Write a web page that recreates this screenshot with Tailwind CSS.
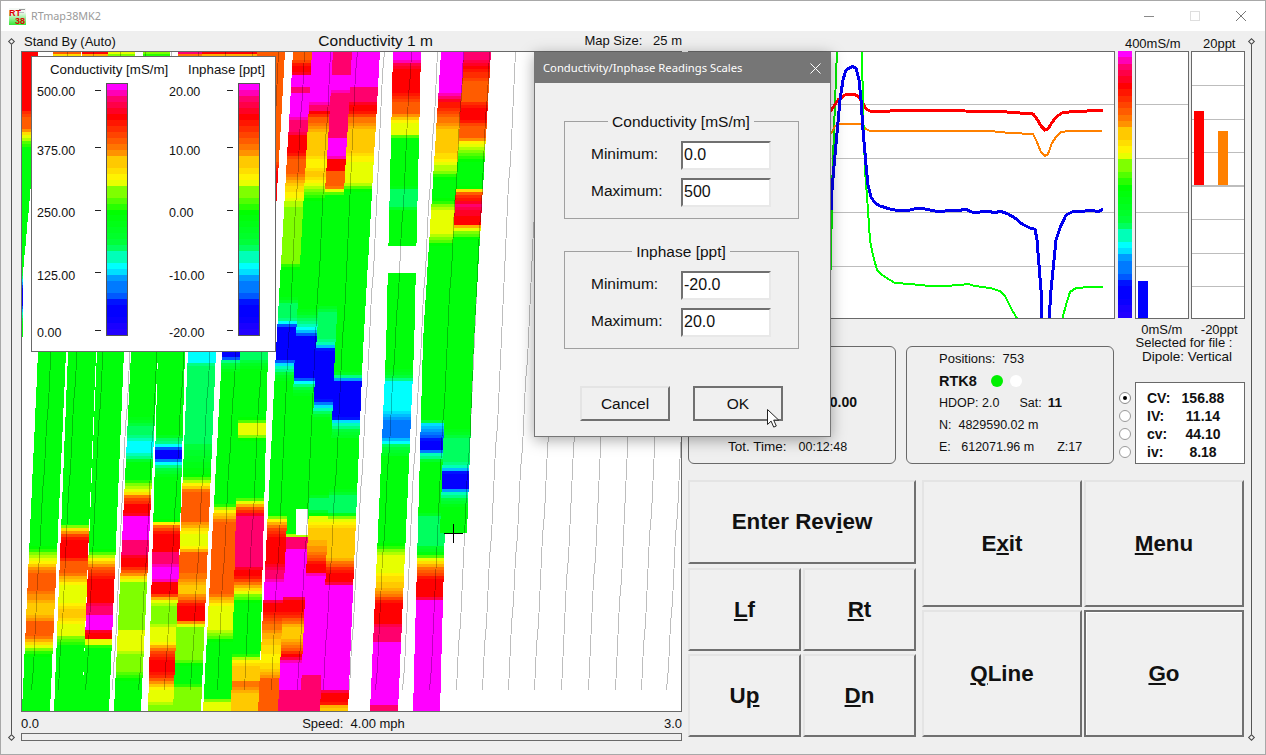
<!DOCTYPE html>
<html>
<head>
<meta charset="utf-8">
<script src="https://cdn.jsdelivr.net/npm/@tailwindcss/browser@4"></script>
</head>
<body class="m-0 bg-[#efefef]">
<div class="relative w-[1266px] h-[755px] overflow-hidden bg-[#efefef] border border-[#a8a8a8] box-border font-['Liberation_Sans',sans-serif] text-[13px] leading-[14px] text-[#111]">

  <!-- title bar -->
  <div class="h-[30px] bg-white flex items-center relative">
    <svg class="ml-[8px] w-[17px] h-[17px]" viewBox="0 0 17 17">
      <defs><linearGradient id="ic" x1="0" y1="0" x2="0" y2="1"><stop offset="0.25" stop-color="#f4f8f4"/><stop offset="1" stop-color="#35e635"/></linearGradient></defs>
      <rect width="17" height="17" fill="url(#ic)"/>
      <rect x="10" y="1" width="6" height="1" fill="#999"/><rect x="10" y="4" width="5" height="1" fill="#bbb"/>
      <text x="0" y="8" font-size="9" font-weight="700" fill="#e00000" font-family="Liberation Sans">RT</text>
      <text x="6" y="16" font-size="9" font-weight="700" fill="#e00000" font-family="Liberation Sans">38</text>
    </svg>
    <span class="ml-[5px] text-[10.8px] text-[#9a9a9a] font-['Noto_Sans',sans-serif]">RTmap38MK2</span>
    <div class="ml-auto flex items-center h-full">
      <svg class="w-[46px] h-[30px]" viewBox="0 0 46 30"><path d="M18 15.5h10" stroke="#8a8a8a" fill="none"/></svg>
      <svg class="w-[46px] h-[30px]" viewBox="0 0 46 30"><rect x="18.5" y="10.5" width="9" height="9" stroke="#dedede" fill="none"/></svg>
      <svg class="w-[46px] h-[30px] mr-[1px]" viewBox="0 0 46 30"><path d="M18 10l10 10M28 10l-10 10" stroke="#777" fill="none"/></svg>
    </div>
  </div>

  <!-- frame guide lines -->
  <div class="absolute left-[10px] top-[40px] h-[697px] w-px bg-[#555]"></div>
  <div class="absolute left-[7px] top-[38px] w-[5px] h-[5px] rotate-45 border border-[#444] bg-[#efefef] ml-[1px]"></div>
  <div class="absolute left-[7px] top-[734px] w-[5px] h-[5px] rotate-45 border border-[#444] bg-[#efefef] ml-[1px]"></div>
  <div class="absolute left-[1250px] top-[40px] h-[697px] w-px bg-[#555]"></div>
  <div class="absolute left-[1247px] top-[38px] w-[5px] h-[5px] rotate-45 border border-[#444] bg-[#efefef] ml-[1px]"></div>
  <div class="absolute left-[1247px] top-[734px] w-[5px] h-[5px] rotate-45 border border-[#444] bg-[#efefef] ml-[1px]"></div>

  <div class="flex pl-[20px]">
    <!-- left column -->
    <div class="w-[661px] shrink-0">
      <div class="h-[20px] flex items-end justify-between pb-[2px] pl-[3px]">
        <span>Stand By (Auto)</span>
        <span class="text-[15.5px] leading-[16px] ml-[51px]">Conductivity 1 m</span>
        <span class="pb-px">Map Size: &nbsp;&nbsp;25 m</span>
      </div>
      <div class="relative w-[661px] h-[661px] border border-[#696969] bg-white box-border">
        <svg id="map" class="block w-[659px] h-[659px]" viewBox="22 52 659 659" shape-rendering="crispEdges"></svg>
        <!-- legend -->
        <div class="absolute left-[9px] top-[4px] w-[245px] h-[296px] bg-white border border-[#696969] box-border">
          <div class="relative h-[27px] text-[13.3px]">
            <span class="absolute left-[18px] top-[6px] whitespace-nowrap">Conductivity [mS/m]</span>
            <span class="absolute left-[156px] top-[6px] whitespace-nowrap">Inphase [ppt]</span>
          </div>
          <div class="flex pl-[5px] text-[12.5px]">
            <div class="w-[69px] shrink-0">
              <div class="h-[59px] flex items-start"><span class="w-[58px] mt-px">500.00</span><i class="block w-[6px] h-px bg-[#222] mt-[6px]"></i></div>
              <div class="h-[62px] flex items-start"><span class="w-[58px] mt-px">375.00</span><i class="block w-[6px] h-px bg-[#222] mt-[4px]"></i></div>
              <div class="h-[63px] flex items-start"><span class="w-[58px] mt-px">250.00</span><i class="block w-[6px] h-px bg-[#222] mt-[5px]"></i></div>
              <div class="h-[57px] flex items-start"><span class="w-[58px] mt-px">125.00</span><i class="block w-[6px] h-px bg-[#222] mt-[4px]"></i></div>
              <div class="flex items-start"><span class="w-[58px] mt-px">0.00</span><i class="block w-[6px] h-px bg-[#222] mt-[5px]"></i></div>
            </div>
            <div class="w-[22px] h-[253px] -mt-px border border-[#555] shrink-0 box-border"><svg class="scale block w-full h-full" preserveAspectRatio="none" viewBox="0 0 20 251" shape-rendering="crispEdges"></svg></div>
            <div class="w-[69px] shrink-0 ml-[41px]">
              <div class="h-[59px] flex items-start"><span class="w-[58px] mt-px">20.00</span><i class="block w-[6px] h-px bg-[#222] mt-[6px]"></i></div>
              <div class="h-[62px] flex items-start"><span class="w-[58px] mt-px">10.00</span><i class="block w-[6px] h-px bg-[#222] mt-[4px]"></i></div>
              <div class="h-[63px] flex items-start"><span class="w-[58px] mt-px">0.00</span><i class="block w-[6px] h-px bg-[#222] mt-[5px]"></i></div>
              <div class="h-[57px] flex items-start"><span class="w-[58px] mt-px">-10.00</span><i class="block w-[6px] h-px bg-[#222] mt-[4px]"></i></div>
              <div class="flex items-start"><span class="w-[58px] mt-px">-20.00</span><i class="block w-[6px] h-px bg-[#222] mt-[5px]"></i></div>
            </div>
            <div class="w-[22px] h-[253px] -mt-px border border-[#555] shrink-0 box-border"><svg class="scale block w-full h-full" preserveAspectRatio="none" viewBox="0 0 20 251" shape-rendering="crispEdges"></svg></div>
          </div>
        </div>
      </div>
      <div class="h-[21px] flex items-center justify-between pt-[2px]">
        <span>0.0</span>
        <span class="ml-[4px]">Speed: &nbsp;4.00 mph</span>
        <span>3.0</span>
      </div>
      <div class="h-[8px] border border-[#696969] bg-[#efefef] box-border"></div>
    </div>

    <!-- right column -->
    <div class="ml-[6px] w-[558px] shrink-0">
      <div class="flex">
        <div class="w-[427px] shrink-0 pt-[20px]">
          <div class="h-[268px] border border-[#696969] bg-white box-border">
            <svg class="block w-[425px] h-[266px]" viewBox="689 52 425 266" shape-rendering="crispEdges">
              <g stroke="#bdbdbd" fill="none"><path d="M689 104.5H1114M689 158.5H1114M689 212.5H1114M689 266.5H1114"/></g>
              <polyline fill="none" stroke="#00ee00" stroke-width="2" points="831,270 832,190 834,130 837,50"/>
              <polyline fill="none" stroke="#ff0000" stroke-width="3" points="830,112 838,100 845,95 853,94 858,96 862,102 866,109 870,111 880,111.5 900,110.5 920,110.5 965,111 1000,111.5 1020,113 1033,114 1037,119 1041,126 1045,130 1048,129 1051,124 1056,117 1062,113 1072,111.5 1103,110.5"/>
              <polyline fill="none" stroke="#ff8000" stroke-width="2" points="831,134 835,126 840,124 862,124 866,129 870,131 900,131 990,131 1010,133 1033,134 1036,140 1041,152 1045,156 1048,154 1052,143 1056,137 1061,132 1070,131 1102,131"/>
              <polyline fill="none" stroke="#00ff00" stroke-width="2" points="862,50 863,110 865,170 868,210 870,240 873,255 877,270 882,275 890,280 895,283 910,284 930,286 945,286 960,285 968,284 975,286 990,288 1000,291 1005,296 1012,310 1018,320"/>
              <polyline fill="none" stroke="#00ff00" stroke-width="2" points="1062,320 1066,305 1070,292 1076,288 1090,287 1103,287"/>
              <polyline fill="none" stroke="#0000ee" stroke-width="3" points="831,210 832,190 835,155 840,100 843,80 846,70 852,66.5 856,68 859,80 861,100 863,130 866,165 868,185 871,197 875,203 880,206 890,209 900,211 910,210 916,208.5 925,209 935,211 945,211 952,210 958,211 965,209 972,212 980,212 988,211 995,213 1000,211 1008,214 1015,218 1022,224 1030,228 1034,229 1035,229 1037,240 1039,265 1041,290 1042,320"/>
              <polyline fill="none" stroke="#0000ee" stroke-width="3" points="1049,320 1051,290 1054,260 1056,240 1060,228 1066,215 1072,212 1085,211 1092,210 1098,212 1103,209"/>
            </svg>
          </div>
          <div class="mt-[27px] flex gap-[10px]">
            <div class="w-[208px] h-[118px] border border-[#696969] rounded-[6px] box-border relative">
              <div class="absolute right-[38px] top-[48px] font-bold text-[14px]">0.00</div>
              <div class="absolute left-[39px] top-[93px] text-[12.5px] whitespace-nowrap"><span class="text-[13.5px]">Tot. Time:</span><span class="ml-[12px]">00:12:48</span></div>
            </div>
            <div class="w-[208px] h-[118px] border border-[#696969] rounded-[6px] box-border pl-[32px] pt-px text-[12.5px]">
              <div class="h-[22px] flex items-center text-[13px]">Positions: &nbsp;753</div>
              <div class="h-[22px] flex items-center font-bold text-[14.5px]">RTK8<span class="ml-[14px] w-[12px] h-[12px] rounded-full bg-[#00f000]"></span><span class="ml-[7px] w-[12px] h-[12px] rounded-full bg-white"></span></div>
              <div class="h-[22px] flex items-center">HDOP: 2.0<span class="ml-[20px]">Sat:</span><b class="ml-[6px] text-[13.5px]">11</b></div>
              <div class="h-[22px] flex items-center">N: &nbsp;4829590.02 m</div>
              <div class="h-[22px] flex items-center">E: &nbsp;&nbsp;612071.96 m<span class="ml-[23px]">Z:17</span></div>
            </div>
          </div>
        </div>
        <div class="w-[131px] shrink-0 pl-[3px]">
          <div class="flex h-[20px] items-start pt-[6px]">
            <span class="ml-[2px] w-[66px] text-center">400mS/m</span>
            <span class="ml-[7px] w-[54px] text-center">20ppt</span>
          </div>
          <div class="flex h-[268px]">
            <div class="w-[14px] h-[267px] shrink-0"><svg class="scale block w-full h-full" preserveAspectRatio="none" viewBox="0 0 20 251" shape-rendering="crispEdges"></svg></div>
            <div class="ml-[3px] w-[54px] border border-[#696969] bg-white box-border relative overflow-hidden">
              <div class="absolute left-0 right-0 top-[52px] h-px bg-[#bdbdbd]"></div>
              <div class="absolute left-0 right-0 top-[106px] h-px bg-[#bdbdbd]"></div>
              <div class="absolute left-0 right-0 top-[160px] h-px bg-[#bdbdbd]"></div>
              <div class="absolute left-0 right-0 top-[214px] h-px bg-[#bdbdbd]"></div>
              <div class="absolute left-[2px] bottom-0 w-[10px] h-[37px] bg-[#0000ff]"></div>
            </div>
            <div class="ml-[2px] w-[54px] border border-[#696969] bg-white box-border relative overflow-hidden">
              <div class="absolute left-0 right-0 top-[33px] h-px bg-[#bdbdbd]"></div>
              <div class="absolute left-0 right-0 top-[67px] h-px bg-[#bdbdbd]"></div>
              <div class="absolute left-0 right-0 top-[100px] h-px bg-[#bdbdbd]"></div>
              <div class="absolute left-0 right-0 top-[133px] h-[2px] bg-[#bdbdbd]"></div>
              <div class="absolute left-0 right-0 top-[167px] h-px bg-[#bdbdbd]"></div>
              <div class="absolute left-0 right-0 top-[201px] h-px bg-[#bdbdbd]"></div>
              <div class="absolute left-0 right-0 top-[234px] h-px bg-[#bdbdbd]"></div>
              <div class="absolute left-[2px] top-[59px] w-[10px] h-[74px] bg-[#ff0000]"></div>
              <div class="absolute left-[26px] top-[79px] w-[10px] h-[54px] bg-[#ff8000]"></div>
            </div>
          </div>
          <div class="flex mt-[4px] h-[13px]">
            <span class="ml-[16px] w-[54px] text-center pl-[2px]">0mS/m</span>
            <span class="ml-[5px] w-[54px] text-center">-20ppt</span>
          </div>
          <div class="ml-[16px] w-[100px] text-center whitespace-nowrap">Selected for file :</div>
          <div class="ml-[23px] w-[92px] text-center whitespace-nowrap text-[13.5px]">Dipole: Vertical</div>
          <div class="flex mt-[18px]">
            <div class="w-[16px] pt-[10px] flex flex-col gap-[6px] items-start ml-[1px]">
              <span class="w-[12px] h-[12px] rounded-full border border-[#8a8a8a] bg-white flex items-center justify-center"><i class="block w-[4px] h-[4px] rounded-full bg-black"></i></span>
              <span class="w-[12px] h-[12px] rounded-full border border-[#9a9a9a] bg-white"></span>
              <span class="w-[12px] h-[12px] rounded-full border border-[#9a9a9a] bg-white"></span>
              <span class="w-[12px] h-[12px] rounded-full border border-[#9a9a9a] bg-white"></span>
            </div>
            <div class="w-[110px] h-[82px] border border-[#696969] bg-white box-border pl-[11px] pt-[6px] font-bold text-[14px] leading-[18px]">
              <div class="grid grid-cols-[26px_60px] text-center"><span class="text-left">CV:</span><span>156.88</span><span class="text-left">IV:</span><span>11.14</span><span class="text-left">cv:</span><span>44.10</span><span class="text-left">iv:</span><span>8.18</span></div>
            </div>
          </div>
        </div>
      </div>

      <!-- buttons -->
      <div class="flex mt-[16px]">
        <div class="w-[228px] shrink-0 flex flex-col gap-[4px] text-[22.4px] font-bold">
          <div class="h-[84px] bg-[#f0f0f0] border-2 border-t-[#e4e4e4] border-l-[#e4e4e4] border-r-[#707070] border-b-[#707070] box-border flex items-center justify-center">Enter Rev<u>i</u>ew</div>
          <div class="grid grid-cols-2 gap-x-[2px] gap-y-[3px]">
            <div class="h-[83px] bg-[#f0f0f0] border-2 border-t-[#e4e4e4] border-l-[#e4e4e4] border-r-[#707070] border-b-[#707070] box-border flex items-center justify-center"><span><u>L</u>f</span></div>
            <div class="h-[83px] bg-[#f0f0f0] border-2 border-t-[#e4e4e4] border-l-[#e4e4e4] border-r-[#707070] border-b-[#707070] box-border flex items-center justify-center"><span><u>R</u>t</span></div>
            <div class="h-[83px] bg-[#f0f0f0] border-2 border-t-[#e4e4e4] border-l-[#e4e4e4] border-r-[#707070] border-b-[#707070] box-border flex items-center justify-center"><span>U<u>p</u></span></div>
            <div class="h-[83px] bg-[#f0f0f0] border-2 border-t-[#e4e4e4] border-l-[#e4e4e4] border-r-[#707070] border-b-[#707070] box-border flex items-center justify-center"><span><u>D</u>n</span></div>
          </div>
        </div>
        <div class="ml-[6px] w-[322px] shrink-0 grid grid-cols-2 gap-x-[2px] gap-y-[3px] text-[22.4px] font-bold">
          <div class="h-[127px] bg-[#f0f0f0] border-2 border-t-[#e4e4e4] border-l-[#e4e4e4] border-r-[#707070] border-b-[#707070] box-border flex items-center justify-center"><span>E<u>x</u>it</span></div>
          <div class="h-[127px] bg-[#f0f0f0] border-2 border-t-[#e4e4e4] border-l-[#e4e4e4] border-r-[#707070] border-b-[#707070] box-border flex items-center justify-center"><span><u>M</u>enu</span></div>
          <div class="h-[127px] bg-[#f0f0f0] border-2 border-t-[#e4e4e4] border-l-[#e4e4e4] border-r-[#707070] border-b-[#707070] box-border flex items-center justify-center"><span><u>Q</u>Line</span></div>
          <div class="h-[127px] bg-[#f0f0f0] border-2 border-[#707070] shadow-[inset_1px_1px_0_#fff] box-border flex items-center justify-center"><span><u>G</u>o</span></div>
        </div>
      </div>
    </div>
  </div>

  <!-- dialog -->
  <div class="absolute left-[533px] top-[51px] w-[297px] h-[385px] bg-[#f0f0f0] border border-[#767676] box-border shadow-[0_3px_14px_rgba(0,0,0,0.35)] text-[15.5px] leading-[18px]">
    <div class="h-[30px] bg-[#767676] flex items-center pl-[8px] pr-[9px] text-white text-[11.25px] font-['Noto_Sans',sans-serif]">
      <span>Conductivity/Inphase Readings Scales</span>
      <svg class="ml-auto w-[11px] h-[11px]" viewBox="0 0 11 11"><path d="M0.5 0.5l10 10M10.5 0.5l-10 10" stroke="#fff" fill="none"/></svg>
    </div>
    <div class="pl-[29px] pr-[31px] pt-[37px]">
      <fieldset class="h-[108px] border border-[#a0a0a0] box-border pl-[26px] pr-[27px] m-0 -mt-[9px]">
        <legend class="mx-auto px-[4px] leading-[20px] pt-px">Conductivity [mS/m]</legend>
        <div class="flex items-center justify-between h-[29px] mt-[9px]"><span class="pb-[4px]">Minimum:</span><div class="w-[90px] h-[29px] bg-white border-2 border-t-[#707070] border-l-[#707070] border-r-[#e8e8e8] border-b-[#e8e8e8] box-border flex items-center pl-px pb-[2px] text-[16px]">0.0</div></div>
        <div class="flex items-center justify-between h-[29px] mt-[8px]"><span class="pb-[4px]">Maximum:</span><div class="w-[90px] h-[29px] bg-white border-2 border-t-[#707070] border-l-[#707070] border-r-[#e8e8e8] border-b-[#e8e8e8] box-border flex items-center pl-px pb-[2px] text-[16px]">500</div></div>
      </fieldset>
      <fieldset class="h-[108px] border border-[#a0a0a0] box-border pl-[26px] pr-[27px] m-0 mt-[22px]">
        <legend class="mx-auto px-[4px] leading-[20px] pt-px">Inphase [ppt]</legend>
        <div class="flex items-center justify-between h-[29px] mt-[9px]"><span class="pb-[4px]">Minimum:</span><div class="w-[90px] h-[29px] bg-white border-2 border-t-[#707070] border-l-[#707070] border-r-[#e8e8e8] border-b-[#e8e8e8] box-border flex items-center pl-px pb-[2px] text-[16px]">-20.0</div></div>
        <div class="flex items-center justify-between h-[29px] mt-[8px]"><span class="pb-[4px]">Maximum:</span><div class="w-[90px] h-[29px] bg-white border-2 border-t-[#707070] border-l-[#707070] border-r-[#e8e8e8] border-b-[#e8e8e8] box-border flex items-center pl-px pb-[2px] text-[16px]">20.0</div></div>
      </fieldset>
      <div class="flex mt-[37px] ml-[16px] gap-[23px]">
        <div class="w-[90px] h-[35px] bg-[#f0f0f0] border-2 border-t-[#e4e4e4] border-l-[#e4e4e4] border-r-[#707070] border-b-[#707070] box-border flex items-center justify-center">Cancel</div>
        <div class="w-[90px] h-[35px] bg-[#f0f0f0] border-2 border-[#707070] box-border flex items-center justify-center">OK</div>
      </div>
    </div>
    <svg class="absolute left-[231px] top-[355px] w-[15px] h-[21px]" viewBox="0 0 15 21"><path d="M1.5 1.5v15l3.6-3.4 2.6 6 2.6-1.1-2.6-5.9h5z" fill="#fff" stroke="#222" stroke-width="1"/></svg>
  </div>
</div>

<script>
var stops=[[0,[34,0,255]],[.106,[0,0,255]],[.2,[0,136,255]],[.285,[0,255,255]],[.32,[0,255,153]],[.385,[0,255,51]],[.5,[0,255,0]],[.56,[102,255,0]],[.63,[255,255,0]],[.7,[255,192,0]],[.775,[255,102,0]],[.88,[255,0,0]],[.95,[255,0,102]],[1,[255,0,255]]];
function col(v){v=Math.round(v*42)/42;for(var i=1;i<stops.length;i++){if(v<=stops[i][0]){var a=stops[i-1],b=stops[i],t=(v-a[0])/(b[0]-a[0]);return 'rgb('+[0,1,2].map(function(k){return Math.round(a[1][k]+(b[1][k]-a[1][k])*t)}).join(',')+')'}}return 'rgb(255,0,255)'}
var L={M:1,P:.95,R:.87,O:.78,A:.7,Y:.63,L:.56,G:.47,S:.35,C:.285,D:.2,B:.1};
function lerp(p,y){if(y<=p[0][0]){return p[0][1]+(p[1][1]-p[0][1])*(y-p[0][0])/(p[1][0]-p[0][0])}for(var i=1;i<p.length;i++){if(y<=p[i][0]){return p[i-1][1]+(p[i][1]-p[i-1][1])*(y-p[i-1][0])/(p[i][0]-p[i-1][0])}}var n=p.length-1;return p[n][1]+(p[n][1]-p[n-1][1])*(y-p[n][0])/(p[n][0]-p[n-1][0])}
var sw=[
[[[52,10],[173,4],[267,-4.5],[340,-5]],28,"51R 110R 118O 128O 135Y 142L 150G 270G 277S 280C 288B 305B 312C 318S 325G 337G"],
[[[52,53],[352,38],[711,22]],28,"51O 54O 58G 545G 553L 562Y 572O 590O 603A 615A 623O 637O 645Y 650L 657G 711G"],
[[[52,82],[352,68],[711,54]],28,"51R 54R 58G 523G 528Y 534O 540R 557R 563O 573O 585Y 603Y 610A 617A 624Y 632Y 640L 648G 711G"],
[[[52,108],[352,97],[711,82]],27,"51Y 54Y 58G 548G 554L 558Y 568O 578R 600R 606P 614P 616M 630M 632R 638R 640Y 644Y 648G 711G"],
[[[52,143],[352,131],[711,114]],27,"51L 54L 58G 418G 426S 435S 443C 452C 458S 463G 478G 484L 492Y 497O 505R 513R 516P 517M 540M 541P 553P 558R 567R 572O 580Y 585L 627L 632Y 650Y 657L 673L 683G 711G"],
[[[52,178],[352,158],[711,148]],27,"51P 54P 58G 435G 440S 446C 450B 458B 463C 468S 477G 520G 523Y 527O 533R 550R 553P 563P 567M 580M 583R 593R 597O 600Y 607L 622L 628Y 643Y 650O 660R 673R 680O 690Y 700Y 707L 711L"],
[[[52,202],[352,188],[711,173]],28,"51R 54R 58G 340G 352C 360C 368S 440S 470G 472G 480L 484Y 492O 520O 527A 533Y 547Y 553O 573O 585A 593A 600O 605R 620R 623A 627L 660L 668G 683G 687L 711L"],
[[[52,230],[352,222],[711,203]],28,"51R 54R 58G 340G 352B 357B 362S 372G 503G 510Y 516A 523O 593O 600A 605Y 627Y 635L 645G 697G 703Y 711Y"],
[[[52,257],[352,240],[711,231]],28,"51O 160O 172R 200R 206O 210Y 216L 225G 352S 358S 368G 417G 422L 425Y 433Y 437L 441G 497G 503Y 508O 513R 516P 565P 570R 577R 583O 592Y 597L 603G 653G 660Y 667A 680A 684O 692A 711A"],
[[[52,293],[350,276],[711,258]],27,"51O 60O 66R 73R 75M 86M 88P 92P 94M 117M 120P 133P 136R 153R 160O 173O 183A 197Y 210L 263L 270G 297G 305S 318S 323C 327B 360B 365C 372S 380G 513G 520Y 527O 537R 563R 570P 580P 581M 600M 603R 613R 623O 640A 660Y 672A 680O 711O"],
[[[52,312],[352,295],[711,278]],28,"51M 102M 105P 110P 113R 118O 123O 133A 153A 163Y 173A 183Y 193L 203G 310G 320S 330C 337B 378B 382C 386S 395G 535G 537P 548P 550M 597M 600R 613R 620O 627A 640A 650O 655R 660P 662M 690M 692P 711P"],
[[[52,333],[352,316],[711,300]],22,"51P 73P 75M 88M 93P 137P 140M 157M 160R 170R 173O 187O 190Y 193L 197G 305G 312S 340S 345C 350B 400B 407C 412S 420G 495G 500S 510S 514G 517Y 523Y 530A 540A 557O 563R 573R 575M 675M 677P 711P"],
[[[52,352],[350,335],[711,320]],28,"51M 87M 88P 90M 92P 100P 105R 112R 117O 130A 147A 163Y 180Y 187L 193G 372G 378C 382B 418B 422C 428S 440G 490G 497S 512S 517L 522Y 532A 557A 565O 572R 582R 586M 690M 693R 703R 707A 711A"],
[[[52,393],[350,386],[711,370]],28,"51M 60M 63P 70R 93R 103O 113O 123Y 133Y 140G 187G 190S 207S 211G 370G 378S 382C 410C 420D 438D 445S 458G 543G 550L 556Y 572Y 587A 597O 603R 623R 627P 640P 643M 703M 706P 711P"],
[[[52,441],[340,423],[711,413]],27,"51M 93M 97P 103R 117O 130A 150A 163Y 173L 180G 197G 205L 212Y 230Y 240L 247G 420G 423C 432D 442B 450B 453C 458S 463G 513G 517S 543S 553G 560Y 570O 580R 597R 600M 711M"],
[[[52,464],[340,447],[533,440]],27,"51P 60P 68R 85O 100O 107R 120R 127O 138O 143Y 153L 163G 187G 190Y 193O 200R 205P 220R 224R 228Y 233L 243G 430G 440S 462S 468C 473B 488B 492C 497S 507G 533G"]
];
var h='';
sw.forEach(function(s){var pts=s[2].split(' ').map(function(t){return [parseInt(t),L[t.slice(-1)]]});var y0=pts[0][0],y1=pts[pts.length-1][0];for(var y=y0;y<y1;y+=3){var v=lerp(pts,y+1.5);var x=Math.round(lerp(s[0],y+1.5));h+='<rect x="'+x+'" y="'+y+'" width="'+s[1]+'" height="'+Math.min(3,y1-y)+'" fill="'+col(v)+'"/>'}});
h+='<rect x="296" y="509" width="12" height="26" fill="#fff"/><rect x="386" y="246" width="34" height="27" fill="#fff"/>';
for(var i=0;i<25;i++){var b=31+26.45*i;var p=[];for(var y=52;y<=711;y+=22){p.push(Math.round(b+(711-y)*.0535+Math.sin(y/140+i)*.7)+.5+','+y)}h+='<polyline points="'+p.join(' ')+'" fill="none" stroke="#000" stroke-opacity=".26"/>'}
h+='<path d="M444 533.5h19M453.5 524v19" stroke="#000" fill="none"/>';
document.getElementById('map').innerHTML=h;
var b='';for(var k=0;k<42;k++){b+='<rect x="0" y="'+(k*251/42)+'" width="20" height="'+(251/42+.5)+'" fill="'+col(1-(k+.5)/42)+'"/>'}
document.querySelectorAll('svg.scale').forEach(function(e){e.innerHTML=b});
</script>
</body>
</html>
